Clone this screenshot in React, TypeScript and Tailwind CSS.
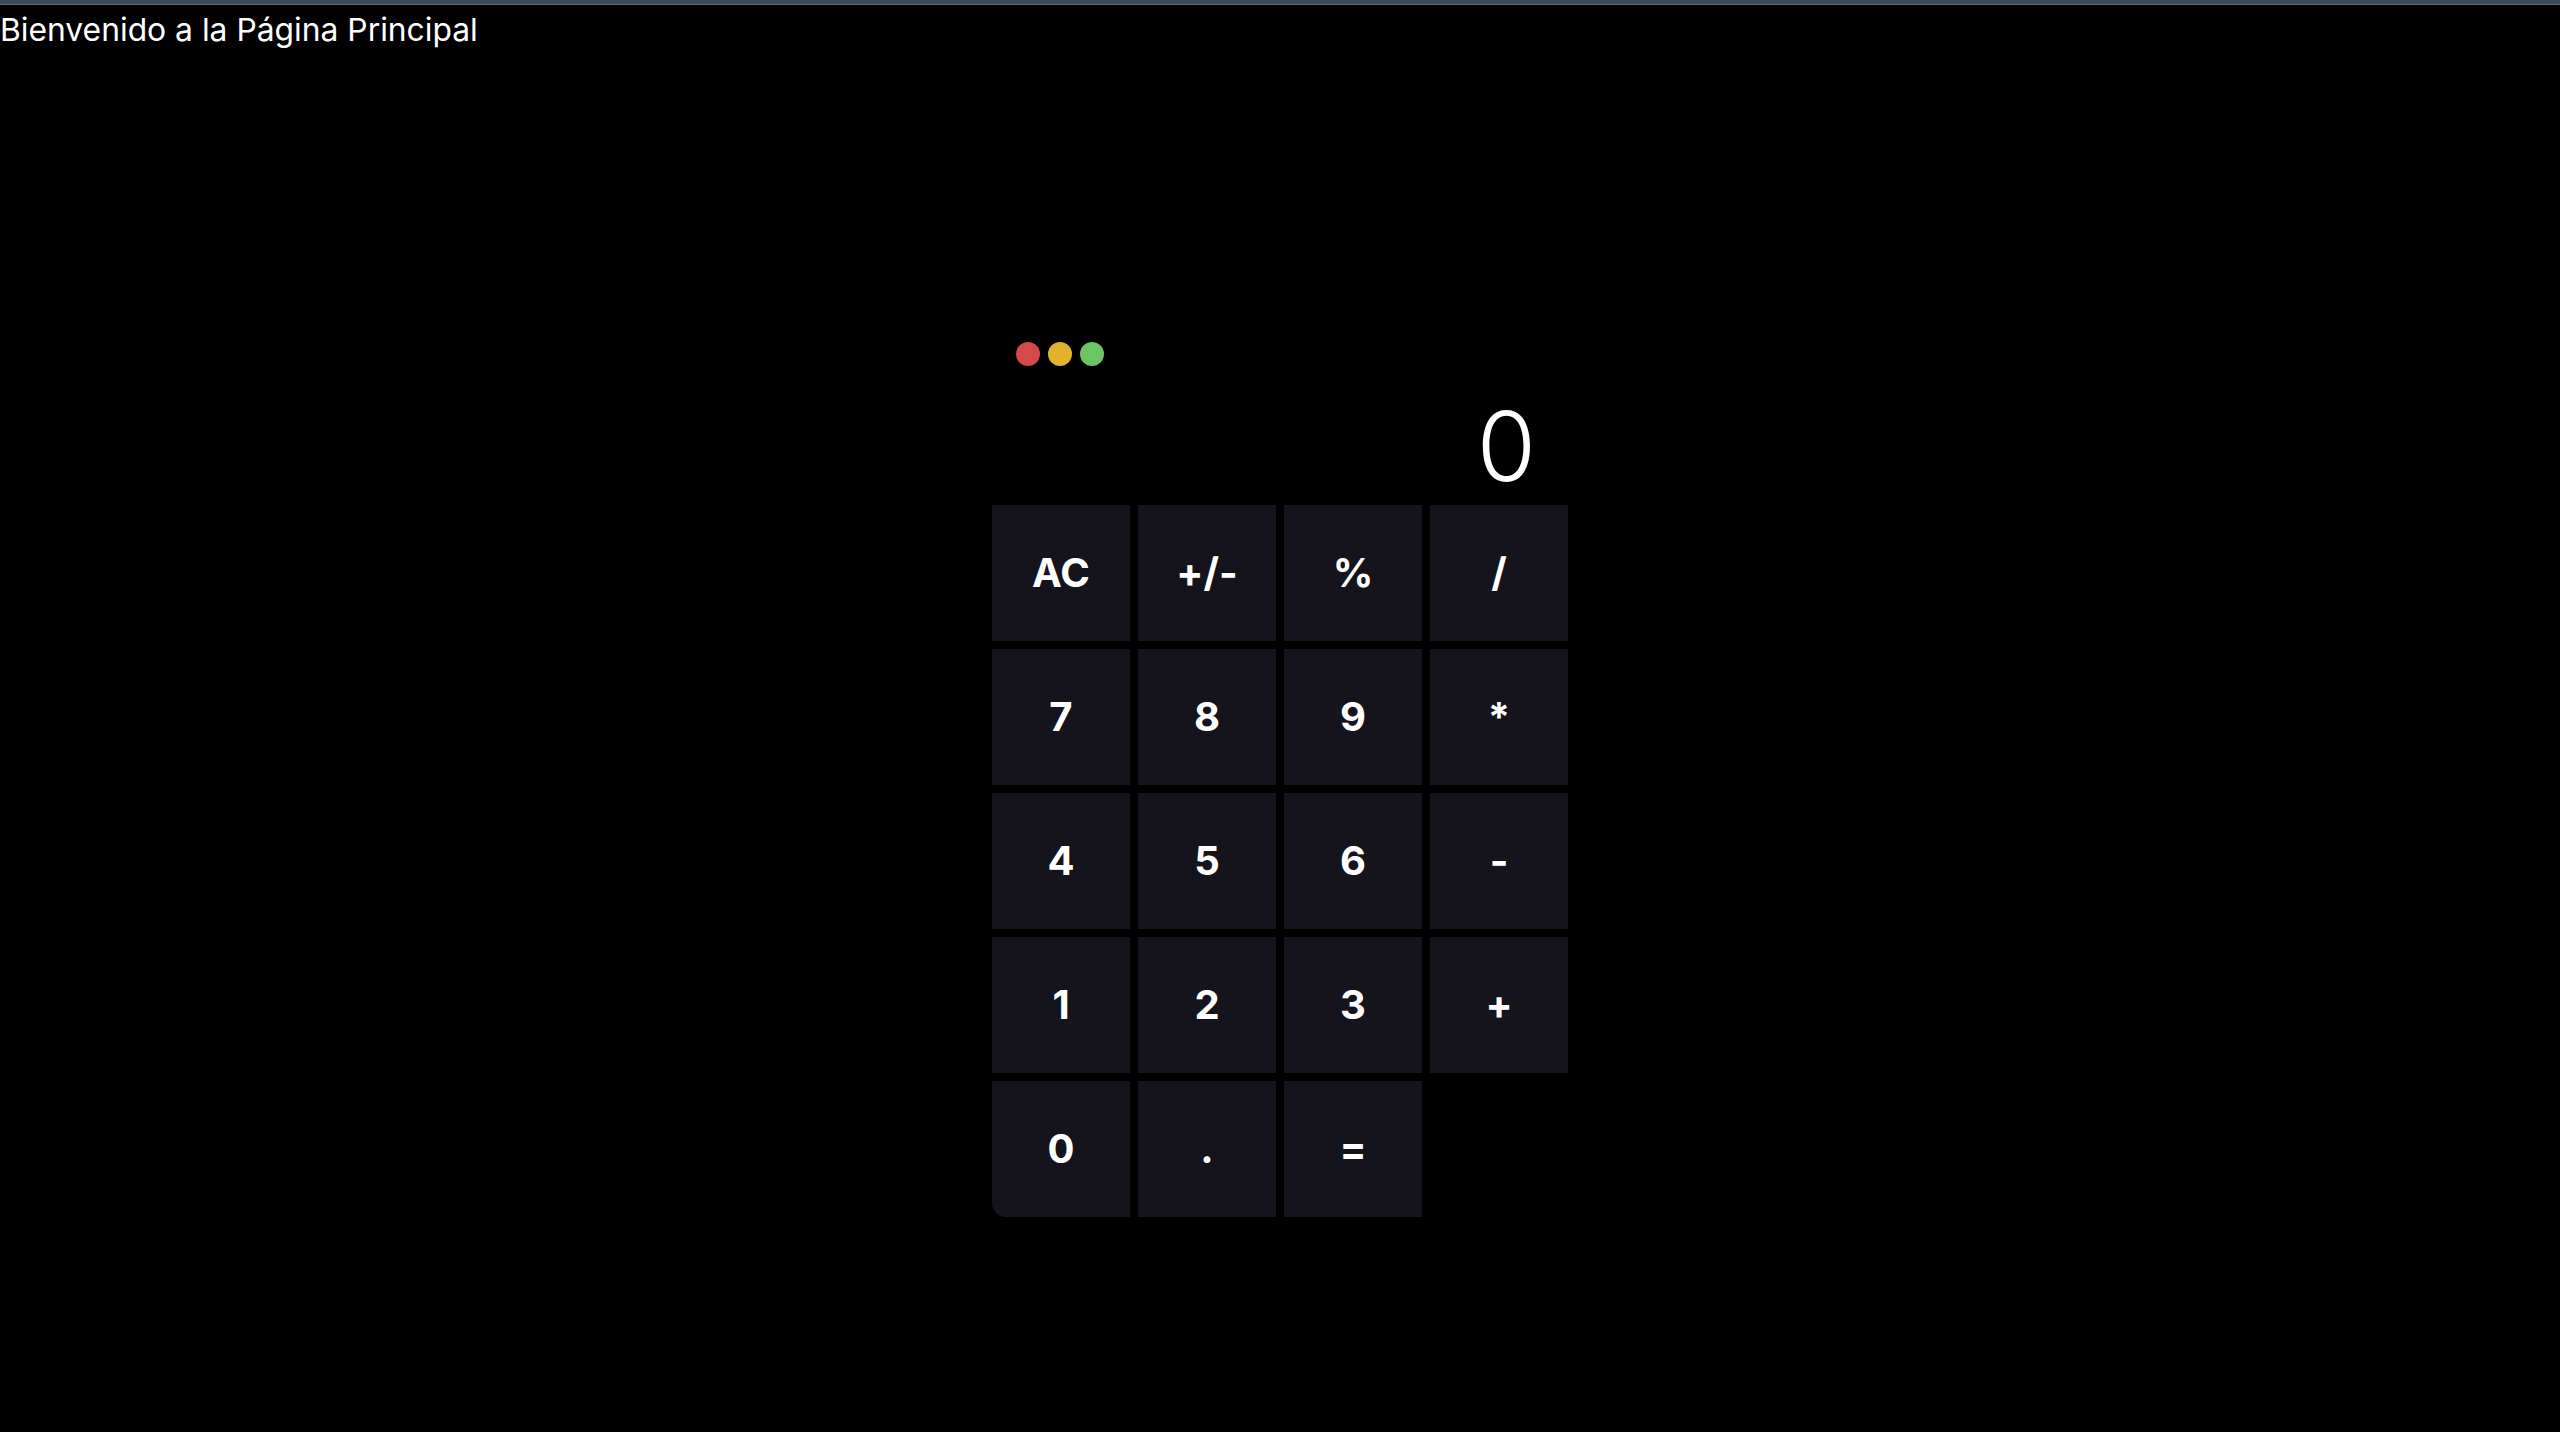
import React from "react";

const rows: string[][] = [
  ["AC", "+/-", "%", "/"],
  ["7", "8", "9", "*"],
  ["4", "5", "6", "-"],
  ["1", "2", "3", "+"],
  ["0", ".", "="],
];

export default function App() {
  return (
    <div className="min-h-[1432px] w-full bg-black text-white font-['Inter',sans-serif]">
      <div className="h-[5px] bg-[#3d4b59] border-b border-[#5d6772]" />
      <div className="pt-[7px] text-[31.8px] leading-[36px] text-white">Bienvenido a la Página Principal</div>
      <div className="flex justify-center pt-[294px]">
        <div className="w-[576px] flex flex-col">
          <div className="flex gap-2 pl-6">
            <span className="w-6 h-6 rounded-full bg-[#d44a4a]" />
            <span className="w-6 h-6 rounded-full bg-[#e0b22e]" />
            <span className="w-6 h-6 rounded-full bg-[#6cc565]" />
          </div>
          <div className="mt-8 pr-8 text-right text-8xl leading-none font-light">0</div>
          <div className="mt-[11px] grid grid-cols-4 gap-x-2 gap-y-2">
            {rows.flat().map((k) => (
              <button
                key={k}
                className={
                  "h-[136px] bg-[#15131c] text-white text-[40px] font-bold flex items-center justify-center" +
                  (k === "0" ? " rounded-bl-[14px]" : "")
                }
              >
                {k}
              </button>
            ))}
          </div>
        </div>
      </div>
    </div>
  );
}
